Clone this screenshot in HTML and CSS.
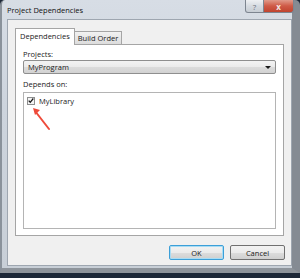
FILE: index.html
```html
<!DOCTYPE html>
<html lang="en">
<head>
    <meta charset="UTF-8">
    <title>Project Dependencies</title>
    <link rel="stylesheet" href="styles.css">
</head>
<body>
    <div class="window">
        <div class="titlebar">
            <span class="title">Project Dependencies</span>
            <div class="caption-btns">
                <div class="cap-btn help">?</div>
                <div class="cap-btn close">x</div>
            </div>
        </div>

        <div class="client">
            <div class="tabs">
                <div class="tab active">Dependencies</div>
                <div class="tab">Build Order</div>
            </div>
            <div class="tab-panel">
                <div class="field-label">Projects:</div>
                <div class="combo">
                    <span>MyProgram</span>
                    <span class="combo-arrow"></span>
                </div>
                <div class="field-label">Depends on:</div>
                <div class="listbox">
                    <div class="list-item">
                        <span class="checkbox">
                            <svg width="7" height="7" viewBox="0 0 7 7"><path d="M0.8 3.6 L2.6 5.6 L6.2 1.2" fill="none" stroke="#1a1a1a" stroke-width="1.5"/></svg>
                        </span>
                        <span>MyLibrary</span>
                    </div>
                    <svg class="arrow" width="24" height="28" viewBox="0 0 24 28">
                        <path d="M19 25 L5 7" stroke="#ee4b3b" stroke-width="2" stroke-linecap="round" fill="none"/>
                        <path d="M3 4 L10 6 L5 11 Z" fill="#ee4b3b"/>
                    </svg>
                </div>
            </div>
            <div class="buttons">
                <div class="btn default">OK</div>
                <div class="btn">Cancel</div>
            </div>
        </div>
    </div>
</body>
</html>
```

FILE: styles.css
```css
* {
    margin: 0;
    padding: 0;
    box-sizing: border-box;
}

body {
    font-family: 'Open Sans', 'Liberation Sans', sans-serif;
    font-size: 7.5px;
    color: #1a1a1a;
    background: #1d2838;
    width: 300px;
    height: 278px;
    overflow: hidden;
}

.window {
    height: 273px;
    width: 300px;
    background: linear-gradient(180deg, #d7dde5 0%, #cdd4dd 40%, #c8cfd7 100%);
    border-left: 2px solid #8a929b;
    border-right: 8px solid #858b93;
    border-bottom: 5px solid #8e949b;
    border-radius: 5px 5px 0 0;
    padding: 0 0 2px 5px;
    display: flex;
    flex-direction: column;
}

.titlebar {
    height: 19px;
    display: flex;
    justify-content: space-between;
    align-items: flex-start;
}

.title {
    font-size: 7.5px;
    margin-top: 5px;
    color: #111111;
}

.caption-btns {
    display: flex;
    margin-right: -2px;
}

.cap-btn {
    height: 13px;
    display: flex;
    align-items: center;
    justify-content: center;
    font-size: 8px;
    border: 1px solid #7d8590;
    border-top: none;
}

.help {
    width: 19px;
    border-radius: 0 0 0 3px;
    background: linear-gradient(180deg, #eef0f3 0%, #d6dbe1 50%, #c7cdd4 100%);
    color: #6b727a;
}

.close {
    width: 30px;
    border-left: none;
    border-radius: 0 0 3px 0;
    background: linear-gradient(180deg, #e09a8a 0%, #cf5a46 50%, #c04430 100%);
    color: #f4e6e2;
    font-weight: bold;
}

.client {
    flex: 1;
    background: #f0f0f0;
    border: 1px solid #9ea6b0;
    padding: 8px 7px 0 7px;
    display: flex;
    flex-direction: column;
}

.tabs {
    display: flex;
    align-items: flex-end;
    height: 16px;
}

.tab {
    height: 13px;
    padding: 0 3px;
    border: 1px solid #a5a5a5;
    border-bottom: none;
    background: linear-gradient(180deg, #f2f2f2 0%, #dcdcdc 100%);
    line-height: 12px;
    margin-left: -1px;
}

.tab.active {
    padding: 0 4px;
    margin-left: 0;
    background: #ffffff;
    line-height: 15px;
    position: relative;
    z-index: 1;
    margin-bottom: -1px;
    height: 17px;
}

.tab-panel {
    height: 192px;
    background: #ffffff;
    border: 1px solid #a5a5a5;
    padding: 4px 7px 6px 7px;
    display: flex;
    flex-direction: column;
}

.field-label {
    height: 10px;
    line-height: 10px;
    margin-bottom: 1px;
}

.combo {
    height: 14px;
    margin-bottom: 5px;
    border: 1px solid #8f8f8f;
    border-radius: 2px;
    background: linear-gradient(180deg, #f3f3f3 0%, #ebebeb 50%, #dcdcdc 51%, #d2d2d2 100%);
    display: flex;
    align-items: center;
    justify-content: space-between;
    padding: 0 4px;
}

.combo-arrow {
    width: 0;
    height: 0;
    border-left: 3px solid transparent;
    border-right: 3px solid transparent;
    border-top: 3px solid #1a1a1a;
}

.listbox {
    flex: 1;
    margin-top: 2px;
    border: 1px solid #b4b4b4;
    background: #ffffff;
    padding: 2px 3px;
    position: relative;
}

.list-item {
    display: flex;
    align-items: center;
    gap: 4px;
    height: 11px;
}

.checkbox {
    width: 8px;
    height: 8px;
    border: 1px solid #8e8f8f;
    background: #f4f4f4;
    display: flex;
    align-items: center;
    justify-content: center;
}

.arrow {
    position: absolute;
    left: 6px;
    top: 11px;
}

.buttons {
    display: flex;
    justify-content: flex-end;
    gap: 6px;
    margin-top: 9px;
    margin-right: -1px;
}

.btn {
    width: 55px;
    height: 15px;
    border: 1px solid #707070;
    border-radius: 2px;
    background: linear-gradient(180deg, #f2f2f2 0%, #ebebeb 50%, #dddddd 51%, #cfcfcf 100%);
    display: flex;
    align-items: center;
    justify-content: center;
}

.btn.default {
    border-color: #3c9fd8;
    box-shadow: inset 0 0 0 1px #a8dcf4;
}
```
